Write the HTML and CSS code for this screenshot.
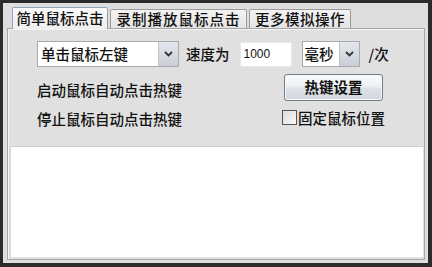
FILE: index.html
```html
<!DOCTYPE html>
<html>
<head>
<meta charset="utf-8">
<link rel="stylesheet" href="styles.css">
</head>
<body>
<div class="window">
  <div class="tabs">
    <div class="tab active t1">简单鼠标点击</div>
    <div class="tab t2">录制播放鼠标点击</div>
    <div class="tab t3">更多模拟操作</div>
  </div>
  <div class="panel">
    <div class="controls">
      <div class="row1">
        <div class="select wide"><span class="val">单击鼠标左键</span><span class="drop"><svg width="9" height="6" viewBox="0 0 9 6"><path d="M1 1 L4.5 4.5 L8 1" fill="none" stroke="#333" stroke-width="1.8"/></svg></span></div>
        <span class="lbl speed">速度为</span>
        <div class="input">1000</div>
        <div class="select narrow"><span class="val">毫秒</span><span class="drop"><svg width="9" height="6" viewBox="0 0 9 6"><path d="M1 1 L4.5 4.5 L8 1" fill="none" stroke="#333" stroke-width="1.8"/></svg></span></div>
        <span class="lbl">/次</span>
      </div>
      <div class="grid">
        <span class="lbl start">启动鼠标自动点击热键</span>
        <div class="btn">热键设置</div>
        <span class="lbl stop">停止鼠标自动点击热键</span>
        <div class="check"><span class="box"></span><span class="lbl">固定鼠标位置</span></div>
      </div>
    </div>
    <div class="log"></div>
  </div>
</div>
</body>
</html>
```
FILE: styles.css
```css
html, body { margin: 0; padding: 0; }
body {
  background: #2a2a2a;
  font-family: "Noto Sans CJK SC", "Noto Sans", sans-serif;
  color: #111;
}
.window {
  width: 432px;
  height: 267px;
  box-sizing: border-box;
  border-style: solid;
  border-color: #2b2b2b;
  border-width: 3px 4px 4px 3px;
  background: #dedede;
  padding: 4px 3px 3px 4px;
  display: flex;
  flex-direction: column;
}
.tabs {
  display: flex;
  padding-left: 5px;
  height: 21px;
  align-items: flex-end;
  position: relative;
  z-index: 1;
}
.tab {
  height: 19px;
  box-sizing: border-box;
  border: 1px solid #9a9a9a;
  border-bottom: none;
  background: linear-gradient(#f3f3f3, #e4e4e4);
  font-size: 14.5px;
  font-weight: 500;
  line-height: 17px;
  text-align: center;
  margin-right: 2px;
  border-radius: 2px 2px 0 0;
  white-space: nowrap;
}
.t1 { width: 96px; }
.t2 { width: 137px; letter-spacing: 1px; }
.t3 { width: 102px; letter-spacing: 0.5px; }
.tab.active {
  line-height: 20px;
  background: linear-gradient(#fafafa, #eeeeee);
  border-color: #8fa8c0 #9a9a9a #9a9a9a #8fa8c0;
  margin-bottom: -1px;
  height: 22px;
}
.panel {
  flex: 1;
  border: 1px solid #a6a6a6;
  box-shadow: inset 1px 1px 0 #f4f4f4;
  background: #e0e0e0;
  display: flex;
  flex-direction: column;
  padding: 0 1px 2px 2px;
}
.controls {
  padding: 12px 0 0 27px;
  height: 117px;
  box-sizing: border-box;
}
.row1 {
  display: flex;
  align-items: center;
  height: 26px;
}
.select {
  height: 26px;
  box-sizing: border-box;
  border: 1px solid #a9a9a9;
  background: #fff;
  display: flex;
  align-items: stretch;
}
.select .val {
  flex: 1;
  font-size: 14.5px;
  font-weight: 500;
  line-height: 24px;
  padding-left: 3px;
}
.select .drop {
  width: 19px;
  background: linear-gradient(#e4e8ee, #c9ced6);
  border-left: 1px solid #c0c4ca;
  display: flex;
  align-items: center;
  justify-content: center;
}
.select.wide { width: 142px; margin-right: 7px; }
.select.narrow { width: 58px; margin-right: 9px; margin-left: 2px; }
.select.narrow .val { padding-left: 2px; }
.lbl {
  font-size: 14.5px;
  font-weight: 500;
  line-height: 18px;
  white-space: nowrap;
}
.speed { margin-right: 10px; }
.input {
  width: 52px;
  height: 25px;
  box-sizing: border-box;
  background: #fff;
  border: 1px solid #e8e8e8;
  font-family: "Liberation Sans", Arial, sans-serif;
  font-size: 12px;
  line-height: 23px;
  padding-left: 3px;
  margin-right: 8px;
}
.grid {
  display: grid;
  grid-template-columns: 245px auto;
  grid-template-rows: 27px 27px;
  row-gap: 1px;
  margin-top: 7px;
  align-items: center;
}
.start { margin-top: 4px; }
.stop { margin-top: 6px; }
.btn {
  width: 99px;
  height: 27px;
  box-sizing: border-box;
  border: 1px solid #6f7d8c;
  border-radius: 3px;
  background: linear-gradient(#fbfbfb 0%, #eef0f2 45%, #dde1e6 55%, #d2d7dd 100%);
  box-shadow: inset 0 0 0 1px #f6f8fa;
  font-size: 14.5px;
  line-height: 24px;
  text-align: center;
  margin-left: 2px;
  font-weight: 700;
}
.check {
  display: flex;
  align-items: center;
  margin-top: 4px;
}
.box {
  width: 15px;
  height: 15px;
  box-sizing: border-box;
  border: 1px solid #555;
  background: linear-gradient(135deg, #dcdcdc, #f8f8f8);
  margin-right: 1px;
}
.log {
  flex: 1;
  background: #fff;
  border-top: 1px solid #d0d0d0;
  border-left: 1px solid #d8d8d8;
}
```
